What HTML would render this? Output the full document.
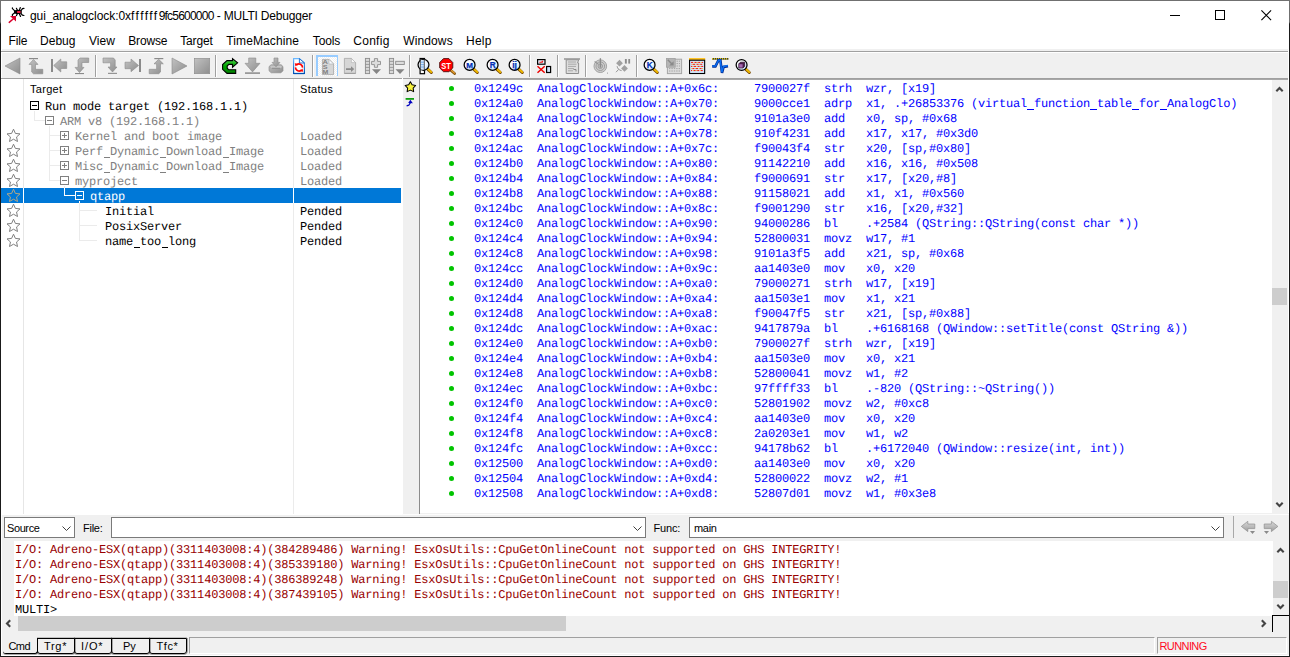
<!DOCTYPE html>
<html><head><meta charset="utf-8"><title>MULTI Debugger</title>
<style>
*{box-sizing:border-box;margin:0;padding:0}
html,body{width:1290px;height:657px;overflow:hidden;background:#fff}
body{position:relative;font-family:"Liberation Sans",sans-serif;font-size:12px;color:#000}
.abs{position:absolute}
.t{position:absolute;white-space:pre;line-height:1}
.ui{font-family:"Liberation Sans",sans-serif;font-size:12px}
.tah{font-family:"Liberation Sans",sans-serif;font-size:11px}
.mono{font-family:"Liberation Mono",monospace;font-size:12px;letter-spacing:-0.2px;white-space:pre;line-height:15px;text-rendering:geometricPrecision}
.row{position:absolute;left:0;height:15px;white-space:pre}
.sep{position:absolute;top:55px;width:2px;height:22px;background:linear-gradient(90deg,#a0a0a0 0,#a0a0a0 50%,#fff 50%,#fff 100%)}
.ic{position:absolute;width:16px;height:16px;top:58px}
.combo{position:absolute;top:517px;height:21px;background:#fff;border:1px solid #7a7a7a}
.chev{position:absolute;top:8px;width:9px;height:5px}
.sb{position:absolute;background:#f0f0f0}
.thumb{position:absolute;background:#cdcdcd}
.box{position:absolute;width:9px;height:9px;border:1px solid #000;background:#fff}
.box i{position:absolute;left:1px;top:3px;width:5px;height:1px;background:#000}
.box b{position:absolute;left:3px;top:1px;width:1px;height:5px;background:#000}
.box.g{border-color:#808080}.box.g i,.box.g b{background:#808080}
.box.w{border-color:#fff;background:#0078d7}.box.w i{background:#fff}
.ln{position:absolute;background:#ebebeb}
.star{position:absolute;left:6px;width:15px;height:15px}
.dot{position:absolute;left:449px;width:5px;height:5px;border-radius:50%;background:#00c400}
.tab{position:absolute;top:638px;height:16px;border:1px solid #000;border-radius:0 0 3px 3px;box-shadow:1px 0 0 rgba(0,0,0,.3),0 1px 0 rgba(0,0,0,.3),0 -1px 0 rgba(0,0,0,.2)}
</style></head>
<body>
<div class="abs" style="left:0;top:0;width:1290px;height:31px;background:#fff"></div>
<div class="abs" style="left:8px;top:7px;width:17px;height:17px"><svg width="17" height="17" viewBox="0 0 17 17" style="display:block;overflow:visible" ><g stroke="#000" stroke-width="1.2" fill="none" stroke-linecap="round"><path d="M6.5 3.7L4.4 1.6L4.4 0.8"/><path d="M9.3 3L8.4 1.3"/><path d="M11.5 3L12.3 0.5"/><path d="M13 3.6L14.5 1.6L16 1.3"/><path d="M6.5 6L4.4 7.6L4.4 8.6"/><path d="M9.3 7L8.4 8.6"/><path d="M11.5 7L12.5 9.5"/><path d="M13 6.5L14.4 8.2L16 8.5"/></g><ellipse cx="9.9" cy="4.9" rx="4" ry="2.1" fill="#000"/><rect x="8.9" y="3.9" width="3.9" height="2.2" rx="1" fill="#f01840"/><path d="M2 9L8 9L8 14.6Z" fill="#d8002c"/><path d="M6 11.2L1.2 15.4" stroke="#d8002c" stroke-width="1.4" stroke-linecap="round"/></svg></div>
<div class="t ui" id="title" style="left:30px;top:10px;letter-spacing:-0.06px">gui_analogclock:0x<span style="letter-spacing:1.45px">ffffff</span><span style="letter-spacing:-0.78px">9fc5600000</span><span style="letter-spacing:-0.2px"> - MULTI Debugger</span></div>
<div class="abs" style="left:1170px;top:15px;width:10px;height:1px;background:#000"></div>
<div class="abs" style="left:1215px;top:10px;width:10px;height:10px;border:1px solid #000"></div>
<svg class="abs" style="left:1261px;top:10px" width="11" height="11" viewBox="0 0 11 11"><path d="M0.4 0.4L10.1 10.1M10.1 0.4L0.4 10.1" stroke="#000" stroke-width="1.1" fill="none"/></svg>
<div class="t ui" style="left:8.5px;top:35px;letter-spacing:-0.16px">File</div>
<div class="t ui" style="left:40px;top:35px;letter-spacing:0.02px">Debug</div>
<div class="t ui" style="left:89px;top:35px;letter-spacing:0.02px">View</div>
<div class="t ui" style="left:128.3px;top:35px;letter-spacing:-0.18px">Browse</div>
<div class="t ui" style="left:180.2px;top:35px;letter-spacing:-0.14px">Target</div>
<div class="t ui" style="left:226.3px;top:35px;letter-spacing:0.11px">TimeMachine</div>
<div class="t ui" style="left:312.8px;top:35px;letter-spacing:-0.14px">Tools</div>
<div class="t ui" style="left:353.2px;top:35px;letter-spacing:0.3px">Config</div>
<div class="t ui" style="left:403.2px;top:35px;letter-spacing:0.13px">Windows</div>
<div class="t ui" style="left:466px;top:35px;letter-spacing:0.25px">Help</div>
<div class="abs" style="left:2px;top:49px;width:1286px;height:2px;background:#f0f0f0"></div>
<div class="abs" style="left:1px;top:51px;width:1287px;height:1px;background:#a0a0a0"></div>
<div class="abs" style="left:2px;top:53px;width:1286px;height:25px;background:#f0f0f0"></div>
<div class="abs" style="left:1px;top:78px;width:1287px;height:1px;background:#a0a0a0"></div>
<div class="abs" style="left:420px;top:79px;width:868px;height:1px;background:#a8a8a8"></div>
<div class="ic" style="left:5px;top:58px"><svg width="16" height="16" viewBox="0 0 16 16" style="display:block;overflow:visible" ><defs><linearGradient id="gg" x1="0" y1="0" x2="1" y2="1"><stop offset="0" stop-color="#c2c2c2"/><stop offset="1" stop-color="#8e8e8e"/></linearGradient></defs><path d="M0 8L15 0L15 16Z" fill="url(#gg)" stroke="#8a8a8a" stroke-width="0.6"/></svg></div>
<div class="ic" style="left:28px;top:58px"><svg width="16" height="16" viewBox="0 0 16 16" style="display:block;overflow:visible" ><defs><linearGradient id="gg" x1="0" y1="0" x2="1" y2="1"><stop offset="0" stop-color="#c2c2c2"/><stop offset="1" stop-color="#8e8e8e"/></linearGradient></defs><rect x="1" y="0" width="9" height="1.2" fill="#8a8a8a"/><path d="M5.5 1.5L10 6.4L7.5 6.4L7.5 11.3L14.8 11.3L14.8 15.8L5.5 15.8L3.7 14L3.7 6.4L1 6.4Z" fill="url(#gg)" stroke="#8a8a8a" stroke-width="0.6"/></svg></div>
<div class="ic" style="left:51px;top:58px"><svg width="16" height="16" viewBox="0 0 16 16" style="display:block;overflow:visible" ><defs><linearGradient id="gg" x1="0" y1="0" x2="1" y2="1"><stop offset="0" stop-color="#c2c2c2"/><stop offset="1" stop-color="#8e8e8e"/></linearGradient></defs><rect x="0" y="1" width="2" height="13" fill="#8a8a8a"/><path d="M2.7 7.5L9.8 1L9.8 3.8L15.7 3.8L15.7 10.5L9.8 10.5L9.8 14Z" fill="url(#gg)" stroke="#8a8a8a" stroke-width="0.6"/></svg></div>
<div class="ic" style="left:74px;top:58px"><svg width="16" height="16" viewBox="0 0 16 16" style="display:block;overflow:visible" ><defs><linearGradient id="gg" x1="0" y1="0" x2="1" y2="1"><stop offset="0" stop-color="#c2c2c2"/><stop offset="1" stop-color="#8e8e8e"/></linearGradient></defs><path d="M14.7 0L14.7 4.5L8 4.5L8 9.4L10 9.4L5.5 14.6L1 9.4L4 9.4L4 2L6 0Z" fill="url(#gg)" stroke="#8a8a8a" stroke-width="0.6"/><rect x="1" y="15" width="9" height="1.1" fill="#8a8a8a"/></svg></div>
<div class="sep" style="left:95px"></div>
<div class="ic" style="left:103px;top:58px"><svg width="16" height="16" viewBox="0 0 16 16" style="display:block;overflow:visible" ><defs><linearGradient id="gg" x1="0" y1="0" x2="1" y2="1"><stop offset="0" stop-color="#c2c2c2"/><stop offset="1" stop-color="#8e8e8e"/></linearGradient></defs><path d="M0 0L10.5 0L12.2 2L12.2 9L14 9L9.5 14L5 9L7.6 9L7.6 4.8L0 4.8Z" fill="url(#gg)" stroke="#8a8a8a" stroke-width="0.6"/><rect x="5" y="14.8" width="9" height="1.1" fill="#8a8a8a"/></svg></div>
<div class="ic" style="left:125px;top:58px"><svg width="16" height="16" viewBox="0 0 16 16" style="display:block;overflow:visible" ><defs><linearGradient id="gg" x1="0" y1="0" x2="1" y2="1"><stop offset="0" stop-color="#c2c2c2"/><stop offset="1" stop-color="#8e8e8e"/></linearGradient></defs><rect x="14" y="1" width="2" height="13" fill="#8a8a8a"/><path d="M13.5 7.5L6 1L6 4.2L0 4.2L0 10.7L6 10.7L6 13.7Z" fill="url(#gg)" stroke="#8a8a8a" stroke-width="0.6"/></svg></div>
<div class="ic" style="left:149px;top:58px"><svg width="16" height="16" viewBox="0 0 16 16" style="display:block;overflow:visible" ><defs><linearGradient id="gg" x1="0" y1="0" x2="1" y2="1"><stop offset="0" stop-color="#c2c2c2"/><stop offset="1" stop-color="#8e8e8e"/></linearGradient></defs><rect x="5.3" y="0" width="9" height="1.2" fill="#8a8a8a"/><path d="M9.7 1.3L14.3 5.8L11.5 5.8L11.5 14L9.8 15.7L0.2 15.7L0.2 11.3L7.6 11.3L7.6 5.8L5 5.8Z" fill="url(#gg)" stroke="#8a8a8a" stroke-width="0.6"/></svg></div>
<div class="ic" style="left:172px;top:58px"><svg width="16" height="16" viewBox="0 0 16 16" style="display:block;overflow:visible" ><defs><linearGradient id="gg" x1="0" y1="0" x2="1" y2="1"><stop offset="0" stop-color="#c2c2c2"/><stop offset="1" stop-color="#8e8e8e"/></linearGradient></defs><path d="M0 0L15 8L0 16Z" fill="url(#gg)" stroke="#8a8a8a" stroke-width="0.6"/></svg></div>
<div class="ic" style="left:194px;top:58px"><svg width="16" height="16" viewBox="0 0 16 16" style="display:block;overflow:visible" ><defs><linearGradient id="gg" x1="0" y1="0" x2="1" y2="1"><stop offset="0" stop-color="#c2c2c2"/><stop offset="1" stop-color="#8e8e8e"/></linearGradient></defs><rect x="0.3" y="0.3" width="15.4" height="15.4" fill="url(#gg)" stroke="#8a8a8a" stroke-width="0.6"/></svg></div>
<div class="sep" style="left:215px"></div>
<div class="ic" style="left:222px;top:58px"><svg width="16" height="16" viewBox="0 0 16 16" style="display:block;overflow:visible" ><defs><linearGradient id="gr" x1="0" y1="0" x2="0" y2="1"><stop offset="0" stop-color="#58d858"/><stop offset="0.5" stop-color="#00a400"/><stop offset="1" stop-color="#008000"/></linearGradient></defs><path d="M10.5 0.6L15.6 4.8L10.5 9.2L10.5 6.4L6.8 6.4L5.2 8L5.2 10.2L6.8 11.8L13.7 11.8L13.7 15.4L5 15.4L0.6 11.3L0.6 6.6L5 2.6L10.5 2.6Z" fill="url(#gr)" stroke="#000" stroke-width="1.1" stroke-linejoin="miter"/></svg></div>
<div class="ic" style="left:245px;top:58px"><svg width="16" height="16" viewBox="0 0 16 16" style="display:block;overflow:visible" ><defs><linearGradient id="gg" x1="0" y1="0" x2="1" y2="1"><stop offset="0" stop-color="#c2c2c2"/><stop offset="1" stop-color="#8e8e8e"/></linearGradient></defs><path d="M3.7 0L10.8 0L10.8 5.3L15 5.3L7.5 13.9L0 5.3L3.7 5.3Z" fill="url(#gg)" stroke="#8a8a8a" stroke-width="0.6"/><rect x="0" y="14.3" width="15" height="1.6" fill="#8f8f8f"/></svg></div>
<div class="ic" style="left:269px;top:58px"><svg width="16" height="16" viewBox="0 0 16 16" style="display:block;overflow:visible" ><defs><linearGradient id="gg" x1="0" y1="0" x2="1" y2="1"><stop offset="0" stop-color="#c2c2c2"/><stop offset="1" stop-color="#8e8e8e"/></linearGradient></defs><path d="M2 6.8L12.2 6.8L14 8.6L14 12.8L12 14.8L2.2 14.8L0 12.8L0 8.6Z" fill="url(#gg)" stroke="#8a8a8a" stroke-width="0.6"/><path d="M0.4 8.8L2.4 7.3L11.8 7.3L13.6 8.8L11.8 10.4L2.4 10.4Z" fill="#c6c6c6" stroke="#969696" stroke-width="0.5"/><path d="M3 10.3H11.2" stroke="#8c8c8c" stroke-width="0.9"/><path d="M5 0L9 0L9 4.4L11 4.4L7 8.8L3 4.4L5 4.4Z" fill="url(#gg)" stroke="#8a8a8a" stroke-width="0.6"/></svg></div>
<div class="ic" style="left:293px;top:58px"><svg width="12" height="16" viewBox="0 0 12 16" style="display:block;overflow:visible" ><defs><linearGradient id="bl" x1="0" y1="0" x2="0" y2="1"><stop offset="0" stop-color="#6cb8ff"/><stop offset="1" stop-color="#0050b4"/></linearGradient></defs><path d="M0.6 0.6L6.4 0.6L11.4 5L11.4 15.5L0.6 15.5Z" fill="#fff" stroke="url(#bl)" stroke-width="1.2"/><path d="M0.6 15.5H11.4" stroke="#0050b4" stroke-width="1.3"/><path d="M6.4 0.6L6.4 5L11.4 5Z" fill="#f4f9ff" stroke="#1468c8" stroke-width="0.9"/><path d="M9.4 9.6A3.4 3.4 0 0 0 3.4 7.2" fill="none" stroke="#f00" stroke-width="1.6"/><path d="M1.8 5.2L5.2 5.7L2.5 8.6Z" fill="#f00"/><path d="M2.6 9.4A3.4 3.4 0 0 0 8.6 11.8" fill="none" stroke="#f00" stroke-width="1.6"/><path d="M10.2 13.8L6.8 13.3L9.5 10.4Z" fill="#f00"/></svg></div>
<div class="sep" style="left:312px"></div>
<div class="abs" style="left:316px;top:55px;width:22px;height:21px;border:solid #98ccff;border-width:2px 1px 0 2px;background:repeating-conic-gradient(#fff 0 25%,#f0f0f0 0 50%) 0 0/2px 2px"></div>
<div class="ic" style="left:322px;top:59px"><svg width="12" height="16" viewBox="0 0 12 16" style="display:block;overflow:visible" ><path d="M0.4 0.4L7 0.4L11.6 5L11.6 15.6L0.4 15.6Z" fill="#d6d6d6" stroke="#a4a4a4" stroke-width="0.8"/><path d="M7 0.4L7 5L11.6 5Z" fill="#f6faff" stroke="#b0b0b0" stroke-width="0.6"/><g font-family="Liberation Sans, sans-serif" font-weight="bold" font-size="5.8" fill="#7e7e7e"><text x="0.6" y="4.8" textLength="5.4" lengthAdjust="spacingAndGlyphs">A</text><text x="0.8" y="10" textLength="4.8" lengthAdjust="spacingAndGlyphs">S</text><text x="0.4" y="15.4" textLength="5.8" lengthAdjust="spacingAndGlyphs">M</text></g></svg></div>
<div class="ic" style="left:344px;top:58px"><svg width="12" height="16" viewBox="0 0 12 16" style="display:block;overflow:visible" ><path d="M0.4 0.4L7.4 0.4L11.6 4.6L11.6 15.4L0.4 15.4Z" fill="#d6d6d6" stroke="#a6a6a6" stroke-width="0.8"/><path d="M0.4 15.4H11.6" stroke="#989898" stroke-width="0.9"/><path d="M7.4 0.4L7.4 4.6L11.6 4.6Z" fill="#f8f8f8" stroke="#b0b0b0" stroke-width="0.6"/><path d="M2 10.3L7 10.3L7 8.3L10.2 11.1L7 13.9L7 11.9L2 11.9Z" fill="#8a8a8a"/></svg></div>
<div class="ic" style="left:365px;top:58px"><svg width="16" height="16" viewBox="0 0 16 16" style="display:block;overflow:visible" ><rect x="0.4" y="0.4" width="4.2" height="15.2" fill="#d9d9d9" stroke="#8c8c8c" stroke-width="0.9"/><path d="M0.4 3.4H4.6M0.4 6.4H4.6M0.4 9.4H4.6M0.4 12.4H4.6" stroke="#8c8c8c" stroke-width="0.8"/><path d="M9.4 0.6L12.6 0.6L12.6 3.4L15.5 3.4L15.5 6.6L12.6 6.6L12.6 9.3L9.4 9.3L9.4 6.6L6.6 6.6L6.6 3.4L9.4 3.4Z" fill="#dcdcdc" stroke="#8c8c8c" stroke-width="0.9"/><path d="M7 11.2L16 11.2L11.5 16Z" fill="#858585"/></svg></div>
<div class="ic" style="left:389px;top:58px"><svg width="16" height="16" viewBox="0 0 16 16" style="display:block;overflow:visible" ><rect x="0.4" y="0.4" width="4.2" height="15.2" fill="#d9d9d9" stroke="#8c8c8c" stroke-width="0.9"/><path d="M0.4 3.4H4.6M0.4 6.4H4.6M0.4 9.4H4.6M0.4 12.4H4.6" stroke="#8c8c8c" stroke-width="0.8"/><rect x="6.7" y="3.3" width="8.6" height="3.2" fill="#dcdcdc" stroke="#8c8c8c" stroke-width="0.9"/><path d="M6.5 11.2L15.5 11.2L11 16Z" fill="#858585"/></svg></div>
<div class="sep" style="left:409px"></div>
<div class="ic" style="left:416.5px;top:58px"><svg width="16" height="16" viewBox="0 0 16 16" style="display:block;overflow:visible" ><defs><radialGradient id="lg" cx="0.35" cy="0.3" r="0.9"><stop offset="0" stop-color="#fff"/><stop offset="0.5" stop-color="#f2f8ff"/><stop offset="1" stop-color="#98c6f4"/></radialGradient></defs><path d="M10.9 11.3L14.3 14.5" stroke="#7a4a00" stroke-width="3" stroke-linecap="round"/><path d="M10.7 10.9L14.2 14" stroke="#f2bc00" stroke-width="1.9" stroke-linecap="round"/><rect x="3.1" y="0.5" width="4.4" height="15.2" fill="#fff" stroke="#000" stroke-width="1.2"/><circle cx="6.5" cy="6.8" r="5.45" fill="url(#lg)" stroke="#000" stroke-width="1.25"/><rect x="3.7" y="1.9" width="3.2" height="9.7" fill="#d2e6fc"/><path d="M3.7 4.2H6.9M3.7 6.6H6.9M3.7 9H6.9" stroke="#6aa8ee" stroke-width="0.9"/><path d="M3.3 1.7L3.3 11.7M7.3 1.4L7.3 12" stroke="#444" stroke-width="0.9"/></svg></div>
<div class="ic" style="left:439px;top:58px"><svg width="16" height="16" viewBox="0 0 16 16" style="display:block;overflow:visible" ><path d="M10.8 11.4L15.6 15.6" stroke="#7a4a00" stroke-width="2.6" stroke-linecap="round"/><path d="M10.9 11L15.3 15" stroke="#e09a30" stroke-width="1.6" stroke-linecap="round"/><path d="M4.5 0.6L9.9 0.6L13.8 4.5L13.8 9.9L9.9 13.7L4.5 13.7L0.7 9.9L0.7 4.5Z" fill="#ff0000" stroke="#4a1010" stroke-width="0.9"/><text x="2.2" y="10.7" font-family="Liberation Sans, sans-serif" font-weight="bold" font-size="9.2" fill="#fff" textLength="9.6" lengthAdjust="spacingAndGlyphs">ST</text></svg></div>
<div class="ic" style="left:462.6px;top:58px"><svg width="16" height="16" viewBox="0 0 16 16" style="display:block;overflow:visible" ><defs><radialGradient id="lg" cx="0.35" cy="0.3" r="0.9"><stop offset="0" stop-color="#fff"/><stop offset="0.5" stop-color="#f2f8ff"/><stop offset="1" stop-color="#98c6f4"/></radialGradient></defs><path d="M10.9 11.3L14.3 14.5" stroke="#7a4a00" stroke-width="3" stroke-linecap="round"/><path d="M10.7 10.9L14.2 14" stroke="#f2bc00" stroke-width="1.9" stroke-linecap="round"/><circle cx="6.6" cy="6.9" r="5.45" fill="url(#lg)" stroke="#000" stroke-width="1.25"/><text x="6.6" y="9.75" text-anchor="middle" font-family="Liberation Sans, sans-serif" font-weight="bold" font-size="8" fill="#0030b4" stroke="#0030b4" stroke-width="0.25">M</text></svg></div>
<div class="ic" style="left:485.6px;top:58px"><svg width="16" height="16" viewBox="0 0 16 16" style="display:block;overflow:visible" ><defs><radialGradient id="lg" cx="0.35" cy="0.3" r="0.9"><stop offset="0" stop-color="#fff"/><stop offset="0.5" stop-color="#f2f8ff"/><stop offset="1" stop-color="#98c6f4"/></radialGradient></defs><path d="M10.9 11.3L14.3 14.5" stroke="#7a4a00" stroke-width="3" stroke-linecap="round"/><path d="M10.7 10.9L14.2 14" stroke="#f2bc00" stroke-width="1.9" stroke-linecap="round"/><circle cx="6.6" cy="6.9" r="5.45" fill="url(#lg)" stroke="#000" stroke-width="1.25"/><text x="6.6" y="9.75" text-anchor="middle" font-family="Liberation Sans, sans-serif" font-weight="bold" font-size="8.2" fill="#0030b4" stroke="#0030b4" stroke-width="0.25">R</text></svg></div>
<div class="ic" style="left:508px;top:58px"><svg width="16" height="16" viewBox="0 0 16 16" style="display:block;overflow:visible" ><defs><radialGradient id="lg" cx="0.35" cy="0.3" r="0.9"><stop offset="0" stop-color="#fff"/><stop offset="0.5" stop-color="#f2f8ff"/><stop offset="1" stop-color="#98c6f4"/></radialGradient></defs><path d="M10.9 11.3L14.3 14.5" stroke="#7a4a00" stroke-width="3" stroke-linecap="round"/><path d="M10.7 10.9L14.2 14" stroke="#f2bc00" stroke-width="1.9" stroke-linecap="round"/><circle cx="6.6" cy="6.9" r="5.45" fill="url(#lg)" stroke="#000" stroke-width="1.25"/><text x="6.6" y="9.75" text-anchor="middle" font-family="Liberation Sans, sans-serif" font-weight="bold" font-size="8.6" fill="#0030b4" stroke="#0030b4" stroke-width="0.25">ij</text></svg></div>
<div class="sep" style="left:529px"></div>
<div class="ic" style="left:536.5px;top:58px"><svg width="16" height="16" viewBox="0 0 16 16" style="display:block;overflow:visible" ><rect x="0.6" y="1.6" width="7.4" height="4.6" fill="#e8f2ff" stroke="#000" stroke-width="1.2"/><path d="M2.4 4.2L5.2 4.2L5.2 3.2L6.2 3.2" stroke="#f01010" stroke-width="1.1" fill="none"/><path d="M0.5 8.3L7.7 14.7M7.7 8.3L0.5 14.7" stroke="#f00000" stroke-width="1.5"/><rect x="9.6" y="8.5" width="4" height="6" fill="#cfe4ff" stroke="#000" stroke-width="1.2"/></svg></div>
<div class="sep" style="left:557px"></div>
<div class="ic" style="left:564px;top:58px"><svg width="16" height="16" viewBox="0 0 16 16" style="display:block;overflow:visible" ><rect x="0" y="0.2" width="16" height="1.6" fill="#9a9a9a"/><path d="M2.2 1.8L14.6 1.8L13.6 5L14.6 5L14.6 15.5L2.2 15.5Z" fill="#dedede" stroke="#8f8f8f" stroke-width="1"/><path d="M4 4H12M4 6.2H12.5M4 8.4H12M4 10.6H10M4 12.8H9" stroke="#a8a8a8" stroke-width="1"/><path d="M9.5 11.5L12 11.5L12 13.5" stroke="#8a8a8a" stroke-width="1" fill="none"/></svg></div>
<div class="sep" style="left:585px"></div>
<div class="ic" style="left:593px;top:58px"><svg width="16" height="16" viewBox="0 0 16 16" style="display:block;overflow:visible" ><circle cx="7.3" cy="8.2" r="6.3" fill="#cfcfcf" stroke="#a2a2a2" stroke-width="1"/><circle cx="7.3" cy="8.2" r="4.3" fill="none" stroke="#9c9c9c" stroke-width="1"/><circle cx="7.3" cy="8.2" r="2.3" fill="#bdbdbd" stroke="#989898" stroke-width="0.9"/><path d="M7.4 0.2L7.4 9.6" stroke="#8c8c8c" stroke-width="1.3"/><path d="M1.6 3.4L5.4 6.2" stroke="#949494" stroke-width="1.2"/><rect x="14" y="14.6" width="1" height="1" fill="#999"/></svg></div>
<div class="ic" style="left:616px;top:58px"><svg width="16" height="16" viewBox="0 0 16 16" style="display:block;overflow:visible" ><path d="M3.5 1.8L6.9 5.2L3.5 8.6L0.1 5.2Z" fill="#a0a0a0"/><path d="M8.5 7L11.9 10.4L8.5 13.8L5.1 10.4Z" fill="#a0a0a0"/><path d="M0 14.2L2.6 11.4M1.1 8.2C1.4 10.6 3.2 12.3 5.6 12.6" stroke="#8c8c8c" stroke-width="0.9" fill="none"/><rect x="8.9" y="1" width="1.9" height="4.6" fill="#8c8c8c"/><rect x="12.3" y="1" width="1.8" height="4.6" fill="#8c8c8c"/></svg></div>
<div class="sep" style="left:636px"></div>
<div class="ic" style="left:643px;top:58px"><svg width="16" height="16" viewBox="0 0 16 16" style="display:block;overflow:visible" ><defs><radialGradient id="lg" cx="0.35" cy="0.3" r="0.9"><stop offset="0" stop-color="#fff"/><stop offset="0.5" stop-color="#f2f8ff"/><stop offset="1" stop-color="#98c6f4"/></radialGradient></defs><path d="M10.9 11.3L14.3 14.5" stroke="#7a4a00" stroke-width="3" stroke-linecap="round"/><path d="M10.7 10.9L14.2 14" stroke="#f2bc00" stroke-width="1.9" stroke-linecap="round"/><circle cx="6.6" cy="6.9" r="5.45" fill="url(#lg)" stroke="#000" stroke-width="1.25"/><text x="6.6" y="9.75" text-anchor="middle" font-family="Liberation Sans, sans-serif" font-weight="bold" font-size="8.2" fill="#0030b4" stroke="#0030b4" stroke-width="0.25">K</text></svg></div>
<div class="ic" style="left:666px;top:58px"><svg width="16" height="16" viewBox="0 0 16 16" style="display:block;overflow:visible" ><rect x="1.4" y="1.2" width="14.2" height="14.4" fill="#dcdcdc" stroke="#a6a6a6" stroke-width="1"/><path d="M10.5 3.2H14M10.5 5.6H14M10.5 8H14M3 10.6H14M3 13H14" stroke="#a4a4a4" stroke-width="1" stroke-dasharray="1.4 1"/><rect x="0.4" y="0.4" width="8.8" height="8.8" fill="#b4b4b4" stroke="#a0a0a0" stroke-width="0.8"/><path d="M1.8 1.8L6.4 6.4" stroke="#8a8a8a" stroke-width="1.4"/><path d="M7.6 3.2L7.6 7.6L3.2 7.6Z" fill="#8a8a8a"/></svg></div>
<div class="ic" style="left:688.8px;top:58px"><svg width="16" height="16" viewBox="0 0 16 16" style="display:block;overflow:visible" ><rect x="0" y="0" width="16.2" height="2.2" fill="#ffc428"/><rect x="0.55" y="2.2" width="15.1" height="13.3" fill="#d4e8ff" stroke="#000" stroke-width="1.1"/><path d="M2 4.4H14.2" stroke="#f01010" stroke-width="1" stroke-dasharray="2 1.6" stroke-dashoffset="0"/><path d="M2 4.4H14.2" stroke="#ffb400" stroke-width="1" stroke-dasharray="0.9 2.7" stroke-dashoffset="1"/><path d="M2 6.3H14.2" stroke="#f01010" stroke-width="1" stroke-dasharray="2 1.6" stroke-dashoffset="1.6"/><path d="M2 6.3H14.2" stroke="#ffb400" stroke-width="1" stroke-dasharray="0.9 2.7" stroke-dashoffset="2.6"/><path d="M2 8.4H14.2" stroke="#f01010" stroke-width="1" stroke-dasharray="2 1.6" stroke-dashoffset="0.6"/><path d="M2 8.4H14.2" stroke="#ffb400" stroke-width="1" stroke-dasharray="0.9 2.7" stroke-dashoffset="1.6"/><path d="M2 10.6H14.2" stroke="#f01010" stroke-width="1" stroke-dasharray="2 1.6" stroke-dashoffset="2.2"/><path d="M2 10.6H14.2" stroke="#ffb400" stroke-width="1" stroke-dasharray="0.9 2.7" stroke-dashoffset="3.2"/><path d="M2 12.6H14.2" stroke="#f01010" stroke-width="1" stroke-dasharray="2 1.6" stroke-dashoffset="1.0"/><path d="M2 12.6H14.2" stroke="#ffb400" stroke-width="1" stroke-dasharray="0.9 2.7" stroke-dashoffset="2.0"/></svg></div>
<div class="ic" style="left:711.8px;top:58px"><svg width="16" height="16" viewBox="0 0 16 16" style="display:block;overflow:visible" ><path d="M0 0.9H16.4" stroke="#000" stroke-width="1.3"/><path d="M0 0.9H16.4" stroke="#ffe800" stroke-width="1.3" stroke-dasharray="1 1"/><path d="M0.2 8.4L3.4 8.4L6.4 2.4L8.4 2.4L10 14.8L11.6 9L16 8.2" fill="none" stroke="#002a90" stroke-width="2.6" stroke-linejoin="miter"/><path d="M0.2 8L3.4 8L6.6 2.2L8.2 2.2L9.9 14.2L11.5 8.4L16 7.6" fill="none" stroke="#0a6cf0" stroke-width="1.5" stroke-linejoin="miter"/></svg></div>
<div class="ic" style="left:735px;top:58px"><svg width="16" height="16" viewBox="0 0 16 16" style="display:block;overflow:visible" ><defs><radialGradient id="lg" cx="0.35" cy="0.3" r="0.9"><stop offset="0" stop-color="#fff"/><stop offset="0.5" stop-color="#f2f8ff"/><stop offset="1" stop-color="#98c6f4"/></radialGradient></defs><path d="M10.9 11.3L14.3 14.5" stroke="#7a4a00" stroke-width="3" stroke-linecap="round"/><path d="M10.7 10.9L14.2 14" stroke="#f2bc00" stroke-width="1.9" stroke-linecap="round"/><circle cx="6.6" cy="7" r="5.45" fill="url(#lg)" stroke="#000" stroke-width="1.25"/><path d="M3.8 5.8L5.4 4.2L9.6 4.2L9.6 8.4L8 10L3.8 10Z" fill="#4a1c4c" stroke="#2a0c28" stroke-width="0.7"/><rect x="4.2" y="6.2" width="3.4" height="3.4" fill="#a468b0"/></svg></div>
<div class="abs" style="left:1px;top:79px;width:401px;height:435px;background:#fff"></div>
<div class="abs" style="left:23px;top:79px;width:1px;height:435px;background:#e6e6e6"></div>
<div class="abs" style="left:293px;top:79px;width:1px;height:435px;background:#ebebeb"></div>
<div class="t tah" id="hTarget" style="left:30px;top:84px;letter-spacing:0.3px">Target</div>
<div class="t tah" id="hStatus" style="left:300px;top:84px;letter-spacing:0.3px">Status</div>
<div class="abs" style="left:1px;top:188px;width:400px;height:15px;background:#0078d7"></div>
<div class="abs" style="left:23px;top:188px;width:1px;height:15px;background:#fff"></div>
<div class="abs" style="left:293px;top:188px;width:1px;height:15px;background:#fff"></div>
<div class="ln" style="left:34px;top:111px;width:1px;height:10px;background:#ebebeb"></div>
<div class="ln" style="left:34px;top:120px;width:11px;height:1px;background:#ebebeb"></div>
<div class="ln" style="left:49px;top:126px;width:1px;height:55px;background:#ebebeb"></div>
<div class="ln" style="left:49px;top:135px;width:11px;height:1px;background:#ebebeb"></div>
<div class="ln" style="left:49px;top:150px;width:11px;height:1px;background:#ebebeb"></div>
<div class="ln" style="left:49px;top:165px;width:11px;height:1px;background:#ebebeb"></div>
<div class="ln" style="left:49px;top:180px;width:11px;height:1px;background:#ebebeb"></div>
<div class="ln" style="left:64px;top:186px;width:1px;height:2px;background:#ebebeb"></div>
<div class="ln" style="left:64px;top:188px;width:1px;height:8px;background:#fff"></div>
<div class="ln" style="left:64px;top:195px;width:11px;height:1px;background:#fff"></div>
<div class="ln" style="left:79px;top:201px;width:1px;height:2px;background:#fff"></div>
<div class="ln" style="left:79px;top:203px;width:1px;height:38px;background:#ebebeb"></div>
<div class="ln" style="left:79px;top:210px;width:18px;height:1px;background:#ebebeb"></div>
<div class="ln" style="left:79px;top:225px;width:18px;height:1px;background:#ebebeb"></div>
<div class="ln" style="left:79px;top:240px;width:18px;height:1px;background:#ebebeb"></div>
<div class="box" style="left:30px;top:101px"><i></i></div>
<div class="t mono" style="left:45px;top:100px;color:#000">Run mode target (192.168.1.1)</div>
<div class="box g" style="left:45px;top:116px"><i></i></div>
<div class="t mono" style="left:60px;top:115px;color:#808080">ARM v8 (192.168.1.1)</div>
<div class="box g" style="left:60px;top:131px"><i></i><b></b></div>
<div class="t mono" style="left:75px;top:130px;color:#808080">Kernel and boot image</div>
<div class="t mono" style="left:300px;top:130px;color:#808080">Loaded</div>
<svg class="star" style="top:128px" viewBox="0 0 15 15"><path d="M7.50 1.20L9.38 5.41L13.97 5.90L10.54 8.99L11.50 13.50L7.50 11.20L3.50 13.50L4.46 8.99L1.03 5.90L5.62 5.41Z" fill="none" stroke="#808080" stroke-width="1"/></svg>
<div class="box g" style="left:60px;top:146px"><i></i><b></b></div>
<div class="t mono" style="left:75px;top:145px;color:#808080">Perf Dynamic Download Image</div>
<div class="abs" style="left:103.6px;top:157px;width:6.6px;height:1px;background:#808080"></div><div class="abs" style="left:159.6px;top:157px;width:6.6px;height:1px;background:#808080"></div><div class="abs" style="left:222.6px;top:157px;width:6.6px;height:1px;background:#808080"></div><div class="t mono" style="left:300px;top:145px;color:#808080">Loaded</div>
<svg class="star" style="top:143px" viewBox="0 0 15 15"><path d="M7.50 1.20L9.38 5.41L13.97 5.90L10.54 8.99L11.50 13.50L7.50 11.20L3.50 13.50L4.46 8.99L1.03 5.90L5.62 5.41Z" fill="none" stroke="#808080" stroke-width="1"/></svg>
<div class="box g" style="left:60px;top:161px"><i></i><b></b></div>
<div class="t mono" style="left:75px;top:160px;color:#808080">Misc Dynamic Download Image</div>
<div class="abs" style="left:103.6px;top:172px;width:6.6px;height:1px;background:#808080"></div><div class="abs" style="left:159.6px;top:172px;width:6.6px;height:1px;background:#808080"></div><div class="abs" style="left:222.6px;top:172px;width:6.6px;height:1px;background:#808080"></div><div class="t mono" style="left:300px;top:160px;color:#808080">Loaded</div>
<svg class="star" style="top:158px" viewBox="0 0 15 15"><path d="M7.50 1.20L9.38 5.41L13.97 5.90L10.54 8.99L11.50 13.50L7.50 11.20L3.50 13.50L4.46 8.99L1.03 5.90L5.62 5.41Z" fill="none" stroke="#808080" stroke-width="1"/></svg>
<div class="box g" style="left:60px;top:176px"><i></i></div>
<div class="t mono" style="left:75px;top:175px;color:#808080">myproject</div>
<div class="t mono" style="left:300px;top:175px;color:#808080">Loaded</div>
<svg class="star" style="top:173px" viewBox="0 0 15 15"><path d="M7.50 1.20L9.38 5.41L13.97 5.90L10.54 8.99L11.50 13.50L7.50 11.20L3.50 13.50L4.46 8.99L1.03 5.90L5.62 5.41Z" fill="none" stroke="#808080" stroke-width="1"/></svg>
<div class="box w" style="left:75px;top:191px"><i></i></div>
<div class="t mono" style="left:90px;top:190px;color:#fff">qtapp</div>
<svg class="star" style="top:188px" viewBox="0 0 15 15"><path d="M7.50 1.20L9.38 5.41L13.97 5.90L10.54 8.99L11.50 13.50L7.50 11.20L3.50 13.50L4.46 8.99L1.03 5.90L5.62 5.41Z" fill="none" stroke="#b4a684" stroke-width="1"/></svg>
<div class="t mono" style="left:105px;top:205px;color:#000">Initial</div>
<div class="t mono" style="left:300px;top:205px;color:#000">Pended</div>
<svg class="star" style="top:203px" viewBox="0 0 15 15"><path d="M7.50 1.20L9.38 5.41L13.97 5.90L10.54 8.99L11.50 13.50L7.50 11.20L3.50 13.50L4.46 8.99L1.03 5.90L5.62 5.41Z" fill="none" stroke="#808080" stroke-width="1"/></svg>
<div class="t mono" style="left:105px;top:220px;color:#000">PosixServer</div>
<div class="t mono" style="left:300px;top:220px;color:#000">Pended</div>
<svg class="star" style="top:218px" viewBox="0 0 15 15"><path d="M7.50 1.20L9.38 5.41L13.97 5.90L10.54 8.99L11.50 13.50L7.50 11.20L3.50 13.50L4.46 8.99L1.03 5.90L5.62 5.41Z" fill="none" stroke="#808080" stroke-width="1"/></svg>
<div class="t mono" style="left:105px;top:235px;color:#000">name too long</div>
<div class="abs" style="left:133.6px;top:247px;width:6.6px;height:1px;background:#000"></div><div class="abs" style="left:161.6px;top:247px;width:6.6px;height:1px;background:#000"></div><div class="t mono" style="left:300px;top:235px;color:#000">Pended</div>
<svg class="star" style="top:233px" viewBox="0 0 15 15"><path d="M7.50 1.20L9.38 5.41L13.97 5.90L10.54 8.99L11.50 13.50L7.50 11.20L3.50 13.50L4.46 8.99L1.03 5.90L5.62 5.41Z" fill="none" stroke="#808080" stroke-width="1"/></svg>
<div class="abs" style="left:402px;top:79px;width:17px;height:435px;background:#f0f0f0"></div>
<div class="abs" style="left:402px;top:78px;width:1px;height:436px;background:#fff"></div>
<div class="abs" style="left:419px;top:79px;width:1px;height:435px;background:#8c8c8c"></div>
<div class="abs" style="left:404px;top:81px;width:13px;height:12px"><svg width="13" height="12" viewBox="0 0 13 12" style="display:block;overflow:visible" ><path d="M6.40 0.70L8.10 3.85L11.63 4.50L9.16 7.10L9.63 10.65L6.40 9.10L3.17 10.65L3.64 7.10L1.17 4.50L4.70 3.85Z" fill="#f8f23c" stroke="#000" stroke-width="1.05" stroke-linejoin="round"/></svg></div>
<div class="abs" style="left:404px;top:97px;width:11px;height:10px"><svg width="11" height="10" viewBox="0 0 11 10" style="display:block;overflow:visible" ><rect x="1.6" y="1" width="8.4" height="1.8" fill="#0fa00f"/><path d="M6.3 2.8L8.9 6.2L4.2 6.0Z" fill="#0000c0"/><path d="M6.6 5.4L4.8 8.2L2.6 8.8" stroke="#0000c0" stroke-width="1.2" fill="none"/></svg></div>
<div class="abs" style="left:420px;top:80px;width:852px;height:434px;background:#fff"></div>
<div class="dot" style="top:86px"></div><div class="t mono" style="left:474px;top:82px;color:#0000ff">0x1249c  AnalogClockWindow::A+0x6c:     7900027f  strh  wzr, [x19]</div>
<div class="dot" style="top:101px"></div><div class="t mono" style="left:474px;top:97px;color:#0000ff">0x124a0  AnalogClockWindow::A+0x70:     9000cce1  adrp  x1, .+26853376 (virtual function table for AnalogClo)</div>
<div class="abs" style="left:1027.4px;top:109px;width:6.6px;height:1px;background:#0000ff"></div><div class="abs" style="left:1090.4px;top:109px;width:6.6px;height:1px;background:#0000ff"></div><div class="abs" style="left:1132.4px;top:109px;width:6.6px;height:1px;background:#0000ff"></div><div class="abs" style="left:1160.4px;top:109px;width:6.6px;height:1px;background:#0000ff"></div><div class="dot" style="top:116px"></div><div class="t mono" style="left:474px;top:112px;color:#0000ff">0x124a4  AnalogClockWindow::A+0x74:     9101a3e0  add   x0, sp, #0x68</div>
<div class="dot" style="top:131px"></div><div class="t mono" style="left:474px;top:127px;color:#0000ff">0x124a8  AnalogClockWindow::A+0x78:     910f4231  add   x17, x17, #0x3d0</div>
<div class="dot" style="top:146px"></div><div class="t mono" style="left:474px;top:142px;color:#0000ff">0x124ac  AnalogClockWindow::A+0x7c:     f90043f4  str   x20, [sp,#0x80]</div>
<div class="dot" style="top:161px"></div><div class="t mono" style="left:474px;top:157px;color:#0000ff">0x124b0  AnalogClockWindow::A+0x80:     91142210  add   x16, x16, #0x508</div>
<div class="dot" style="top:176px"></div><div class="t mono" style="left:474px;top:172px;color:#0000ff">0x124b4  AnalogClockWindow::A+0x84:     f9000691  str   x17, [x20,#8]</div>
<div class="dot" style="top:191px"></div><div class="t mono" style="left:474px;top:187px;color:#0000ff">0x124b8  AnalogClockWindow::A+0x88:     91158021  add   x1, x1, #0x560</div>
<div class="dot" style="top:206px"></div><div class="t mono" style="left:474px;top:202px;color:#0000ff">0x124bc  AnalogClockWindow::A+0x8c:     f9001290  str   x16, [x20,#32]</div>
<div class="dot" style="top:221px"></div><div class="t mono" style="left:474px;top:217px;color:#0000ff">0x124c0  AnalogClockWindow::A+0x90:     94000286  bl    .+2584 (QString::QString(const char *))</div>
<div class="dot" style="top:236px"></div><div class="t mono" style="left:474px;top:232px;color:#0000ff">0x124c4  AnalogClockWindow::A+0x94:     52800031  movz  w17, #1</div>
<div class="dot" style="top:251px"></div><div class="t mono" style="left:474px;top:247px;color:#0000ff">0x124c8  AnalogClockWindow::A+0x98:     9101a3f5  add   x21, sp, #0x68</div>
<div class="dot" style="top:266px"></div><div class="t mono" style="left:474px;top:262px;color:#0000ff">0x124cc  AnalogClockWindow::A+0x9c:     aa1403e0  mov   x0, x20</div>
<div class="dot" style="top:281px"></div><div class="t mono" style="left:474px;top:277px;color:#0000ff">0x124d0  AnalogClockWindow::A+0xa0:     79000271  strh  w17, [x19]</div>
<div class="dot" style="top:296px"></div><div class="t mono" style="left:474px;top:292px;color:#0000ff">0x124d4  AnalogClockWindow::A+0xa4:     aa1503e1  mov   x1, x21</div>
<div class="dot" style="top:311px"></div><div class="t mono" style="left:474px;top:307px;color:#0000ff">0x124d8  AnalogClockWindow::A+0xa8:     f90047f5  str   x21, [sp,#0x88]</div>
<div class="dot" style="top:326px"></div><div class="t mono" style="left:474px;top:322px;color:#0000ff">0x124dc  AnalogClockWindow::A+0xac:     9417879a  bl    .+6168168 (QWindow::setTitle(const QString &amp;))</div>
<div class="dot" style="top:341px"></div><div class="t mono" style="left:474px;top:337px;color:#0000ff">0x124e0  AnalogClockWindow::A+0xb0:     7900027f  strh  wzr, [x19]</div>
<div class="dot" style="top:356px"></div><div class="t mono" style="left:474px;top:352px;color:#0000ff">0x124e4  AnalogClockWindow::A+0xb4:     aa1503e0  mov   x0, x21</div>
<div class="dot" style="top:371px"></div><div class="t mono" style="left:474px;top:367px;color:#0000ff">0x124e8  AnalogClockWindow::A+0xb8:     52800041  movz  w1, #2</div>
<div class="dot" style="top:386px"></div><div class="t mono" style="left:474px;top:382px;color:#0000ff">0x124ec  AnalogClockWindow::A+0xbc:     97ffff33  bl    .-820 (QString::~QString())</div>
<div class="dot" style="top:401px"></div><div class="t mono" style="left:474px;top:397px;color:#0000ff">0x124f0  AnalogClockWindow::A+0xc0:     52801902  movz  w2, #0xc8</div>
<div class="dot" style="top:416px"></div><div class="t mono" style="left:474px;top:412px;color:#0000ff">0x124f4  AnalogClockWindow::A+0xc4:     aa1403e0  mov   x0, x20</div>
<div class="dot" style="top:431px"></div><div class="t mono" style="left:474px;top:427px;color:#0000ff">0x124f8  AnalogClockWindow::A+0xc8:     2a0203e1  mov   w1, w2</div>
<div class="dot" style="top:446px"></div><div class="t mono" style="left:474px;top:442px;color:#0000ff">0x124fc  AnalogClockWindow::A+0xcc:     94178b62  bl    .+6172040 (QWindow::resize(int, int))</div>
<div class="dot" style="top:461px"></div><div class="t mono" style="left:474px;top:457px;color:#0000ff">0x12500  AnalogClockWindow::A+0xd0:     aa1403e0  mov   x0, x20</div>
<div class="dot" style="top:476px"></div><div class="t mono" style="left:474px;top:472px;color:#0000ff">0x12504  AnalogClockWindow::A+0xd4:     52800022  movz  w2, #1</div>
<div class="dot" style="top:491px"></div><div class="t mono" style="left:474px;top:487px;color:#0000ff">0x12508  AnalogClockWindow::A+0xd8:     52807d01  movz  w1, #0x3e8</div>
<div class="sb" style="left:1272px;top:80px;width:16px;height:434px"></div>
<svg class="abs" style="left:1275px;top:86px" width="9" height="6" viewBox="0 0 9 6"><path d="M1.3 5.2L4.5 2L7.7 5.2" stroke="#444" stroke-width="2.1" fill="none"/></svg>
<svg class="abs" style="left:1275px;top:502px" width="9" height="6" viewBox="0 0 9 6"><path d="M1.3 0.8L4.5 4L7.7 0.8" stroke="#444" stroke-width="2.1" fill="none"/></svg>
<div class="thumb" style="left:1272px;top:288px;width:15px;height:17px"></div>
<div class="abs" style="left:2px;top:515px;width:1287px;height:26px;background:#f0f0f0"></div>
<div class="abs" style="left:420px;top:513px;width:869px;height:1px;background:#f0f0f0"></div><div class="abs" style="left:402px;top:514px;width:887px;height:1px;background:#fcfcfc"></div>
<div class="combo" style="left:4px;width:71px"><svg class="chev" style="left:57px" viewBox="0 0 9 5"><path d="M0.5 0.5L4.5 4.5L8.5 0.5" stroke="#404040" stroke-width="1" fill="none"/></svg></div>
<div class="t tah" id="tSource" style="left:7px;top:523px;letter-spacing:-0.4px">Source</div>
<div class="t tah" id="tFile" style="left:83px;top:523px;letter-spacing:-0.25px">File:</div>
<div class="combo" style="left:111px;width:535px"><svg class="chev" style="left:521px" viewBox="0 0 9 5"><path d="M0.5 0.5L4.5 4.5L8.5 0.5" stroke="#404040" stroke-width="1" fill="none"/></svg></div>
<div class="t tah" id="tFunc" style="left:653.5px;top:523px;letter-spacing:-0.15px">Func:</div>
<div class="combo" style="left:689px;width:535px"><svg class="chev" style="left:521px" viewBox="0 0 9 5"><path d="M0.5 0.5L4.5 4.5L8.5 0.5" stroke="#404040" stroke-width="1" fill="none"/></svg></div>
<div class="t tah" id="tMain" style="left:694px;top:523px;letter-spacing:-0.3px">main</div>
<div class="abs" style="left:1233px;top:516px;width:1px;height:22px;background:#a8a8a8"></div>
<div class="abs" style="left:1241px;top:521px;width:15px;height:14px"><svg width="15" height="14" viewBox="0 0 15 14" style="display:block;overflow:visible" ><defs><linearGradient id="ng" x1="0" y1="0" x2="0" y2="1"><stop offset="0" stop-color="#d8d8d8"/><stop offset="0.5" stop-color="#bcbcbc"/><stop offset="1" stop-color="#9a9a9a"/></linearGradient></defs><path d="M0.3 5.4L6.8 0.3L6.8 3L13.8 3L13.8 7.6L6.8 7.6L6.8 10.6Z" fill="url(#ng)" stroke="#8e8e8e" stroke-width="0.7"/><path d="M9 10L14 10L11.5 12.9Z" fill="#8a8a8a"/></svg></div>
<div class="abs" style="left:1263px;top:521px;width:15px;height:14px"><svg width="15" height="14" viewBox="0 0 15 14" style="display:block;overflow:visible" ><defs><linearGradient id="ng" x1="0" y1="0" x2="0" y2="1"><stop offset="0" stop-color="#d8d8d8"/><stop offset="0.5" stop-color="#bcbcbc"/><stop offset="1" stop-color="#9a9a9a"/></linearGradient></defs><path d="M14.9 5.4L8.4 0.3L8.4 3L1.2 3L1.2 7.6L8.4 7.6L8.4 10.6Z" fill="url(#ng)" stroke="#8e8e8e" stroke-width="0.7"/><path d="M1 10L6 10L3.5 12.9Z" fill="#8a8a8a"/></svg></div>
<div class="abs" style="left:14px;top:541px;width:1259px;height:75px;background:#fff"></div>
<div class="abs" style="left:2px;top:541px;width:12px;height:75px;background:#f0f0f0"></div>
<div class="t mono" style="left:15.1px;top:543px;color:#980000">I/O: Adreno-ESX(qtapp)(3311403008:4)(384289486) Warning! EsxOsUtils::CpuGetOnlineCount not supported on GHS INTEGRITY!</div>
<div class="t mono" style="left:15.1px;top:558px;color:#980000">I/O: Adreno-ESX(qtapp)(3311403008:4)(385339180) Warning! EsxOsUtils::CpuGetOnlineCount not supported on GHS INTEGRITY!</div>
<div class="t mono" style="left:15.1px;top:573px;color:#980000">I/O: Adreno-ESX(qtapp)(3311403008:4)(386389248) Warning! EsxOsUtils::CpuGetOnlineCount not supported on GHS INTEGRITY!</div>
<div class="t mono" style="left:15.1px;top:588px;color:#980000">I/O: Adreno-ESX(qtapp)(3311403008:4)(387439105) Warning! EsxOsUtils::CpuGetOnlineCount not supported on GHS INTEGRITY!</div>
<div class="t mono" style="left:15.1px;top:603px;color:#000">MULTI&gt;</div>
<div class="sb" style="left:1273px;top:541px;width:16px;height:75px"></div>
<svg class="abs" style="left:1276px;top:547px" width="9" height="6" viewBox="0 0 9 6"><path d="M1.3 5.2L4.5 2L7.7 5.2" stroke="#444" stroke-width="2.1" fill="none"/></svg>
<svg class="abs" style="left:1276px;top:604px" width="9" height="6" viewBox="0 0 9 6"><path d="M1.3 0.8L4.5 4L7.7 0.8" stroke="#444" stroke-width="2.1" fill="none"/></svg>
<div class="thumb" style="left:1273px;top:581px;width:15px;height:17px"></div>
<div class="sb" style="left:2px;top:616px;width:1270px;height:16px"></div>
<svg class="abs" style="left:5px;top:619px" width="6" height="9" viewBox="0 0 6 9"><path d="M5.2 1.3L2 4.5L5.2 7.7" stroke="#444" stroke-width="2.1" fill="none"/></svg>
<svg class="abs" style="left:1261px;top:619px" width="6" height="9" viewBox="0 0 6 9"><path d="M0.8 1.3L4 4.5L0.8 7.7" stroke="#444" stroke-width="2.1" fill="none"/></svg>
<div class="thumb" style="left:18px;top:616px;width:548px;height:15px"></div>
<div class="abs" style="left:1272px;top:615px;width:17px;height:17px;background:#f0f0f0;border-left:1px solid #000;border-top:1px solid #000"></div>
<div class="abs" style="left:2px;top:632px;width:1287px;height:23px;background:#f0f0f0"></div>
<div class="abs" style="left:3px;top:638px;width:35px;height:16px;border-bottom:1px solid #000;border-right:1px solid #000;border-radius:0 0 3px 3px;box-shadow:0 1px 0 rgba(0,0,0,.3)"></div>
<div class="tab" style="left:37px;width:38px"></div>
<div class="tab" style="left:74px;width:38px"></div>
<div class="tab" style="left:111px;width:39px"></div>
<div class="tab" style="left:149px;width:38px"></div>
<div class="t tah" id="tab0" style="left:8.5px;top:641px;letter-spacing:-0.6px">Cmd</div>
<div class="t tah" id="tab1" style="left:44px;top:641px;letter-spacing:0.7px">Trg*</div>
<div class="t tah" id="tab2" style="left:81px;top:641px;letter-spacing:0.9px">I/O*</div>
<div class="t tah" id="tab3" style="left:123px;top:641px;letter-spacing:0px">Py</div>
<div class="t tah" id="tab4" style="left:156.5px;top:641px;letter-spacing:0.6px">Tfc*</div>
<div class="abs" style="left:189px;top:637px;width:966px;height:17px;border:1px solid;border-color:#a0a0a0 #fff #fff #a0a0a0"></div>
<div class="abs" style="left:1157px;top:637px;width:130px;height:17px;border:1px solid;border-color:#a0a0a0 #fff #fff #a0a0a0"></div>
<div class="t tah" id="tRun" style="left:1159.5px;top:641px;color:#ff0a24;letter-spacing:-0.6px">RUNNING</div>
<div class="abs" style="left:0;top:0;width:1290px;height:1px;background:#707070"></div>
<div class="abs" style="left:0;top:0;width:1px;height:657px;background:linear-gradient(#707070 0,#707070 22px,#1a1a1a 24px,#1a1a1a 100%)"></div>
<div class="abs" style="left:1289px;top:0;width:1px;height:657px;background:linear-gradient(#707070 0,#707070 22px,#1a1a1a 24px,#1a1a1a 100%)"></div>
<div class="abs" style="left:0;top:656px;width:1290px;height:1px;background:#1a1a1a"></div>
</body></html>
